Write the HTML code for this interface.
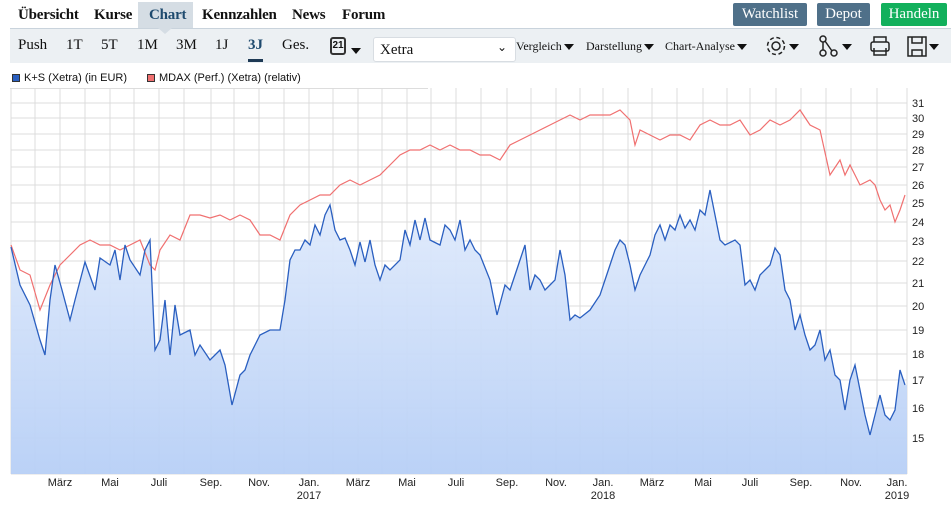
<!DOCTYPE html>
<html><head><meta charset="utf-8"><style>
*{margin:0;padding:0;box-sizing:border-box}
body{width:951px;height:507px;background:#fff;font-family:"Liberation Serif",serif;position:relative;overflow:hidden;color:#111}
.a{position:absolute;white-space:nowrap}
.nav{font-weight:bold;font-size:15px;top:7px;letter-spacing:-0.2px}
.btn{top:3px;height:23px;color:#fff;font-size:15px;text-align:center;line-height:23px;border-radius:2px}
.tb{font-size:15px;top:37px}
.dd{font-size:12px;top:39px}
.tri{display:inline-block;width:0;height:0;border-left:5px solid transparent;border-right:5px solid transparent;border-top:6px solid #111;vertical-align:middle;margin-left:2px}
.lg{font-family:"Liberation Sans",sans-serif;font-size:11px;top:72px}
</style></head><body>
<div class="a" style="left:138px;top:2px;width:55px;height:26px;background:#d5dde4"></div>
<div class="a nav" style="left:18px">Übersicht</div>
<div class="a nav" style="left:94px">Kurse</div>
<div class="a nav" style="left:149px;color:#1e4a6e">Chart</div>
<div class="a nav" style="left:202px">Kennzahlen</div>
<div class="a nav" style="left:292px">News</div>
<div class="a nav" style="left:342px">Forum</div>
<div class="a btn" style="left:733px;width:74px;background:#4f7089">Watchlist</div>
<div class="a btn" style="left:817px;width:53px;background:#4f7089">Depot</div>
<div class="a btn" style="left:881px;width:66px;background:#12b05c">Handeln</div>
<div class="a" style="left:10px;top:28px;width:941px;height:35px;background:#ecf0f3;border-top:1px solid #c9d3dc"></div>
<div class="a" style="left:158px;top:28px;width:0;height:0;border-left:7px solid transparent;border-right:7px solid transparent;border-top:6px solid #d5dde4"></div>
<div class="a tb" style="left:18px">Push</div>
<div class="a tb" style="left:66px">1T</div>
<div class="a tb" style="left:101px">5T</div>
<div class="a tb" style="left:137px">1M</div>
<div class="a tb" style="left:176px">3M</div>
<div class="a tb" style="left:215px">1J</div>
<div class="a tb" style="left:248px;font-weight:bold;color:#1e4a6e">3J</div>
<div class="a" style="left:248px;top:59px;width:15px;height:3px;background:#1e3a55"></div>
<div class="a tb" style="left:282px">Ges.</div>
<div class="a" style="left:330px;top:37px;width:16px;height:18px;border:2px solid #333;border-radius:3px;font:bold 10px 'Liberation Sans',sans-serif;text-align:center;line-height:14px">21</div>
<div class="a" style="left:349px;top:42px"><span class="tri"></span></div>
<div class="a" style="left:373px;top:37px;width:143px;height:25px;background:#fff;border:1px solid #d8dde2;border-radius:3px;font-size:15px;padding:4px 6px">Xetra<span style="position:absolute;right:8px;top:2px;font-size:12px">⌄</span></div>
<div class="a dd" style="left:516px">Vergleich<span class="tri"></span></div>
<div class="a dd" style="left:586px">Darstellung<span class="tri"></span></div>
<div class="a dd" style="left:665px">Chart-Analyse<span class="tri"></span></div>
<svg class="a" style="left:765px;top:34px" width="185" height="26" fill="none" stroke="#222" stroke-width="1.5">
<circle cx="11" cy="12" r="4"/><circle cx="11" cy="12" r="8.5" stroke-dasharray="4 2.7"/>
<path d="M24 10h10l-5 6z" fill="#111" stroke="none"/>
<circle cx="58" cy="5" r="3"/><circle cx="58" cy="19" r="3"/><circle cx="69" cy="19" r="3"/><path d="M58 8v8M60 7l7 10"/>
<path d="M77 10h10l-5 6z" fill="#111" stroke="none"/>
<rect x="106" y="8" width="18" height="9" rx="2"/><path d="M109 8V3h12v5M109 14v7h12v-7"/>
<rect x="143" y="3" width="18" height="19"/><path d="M147 3v6h10V3M147 22v-6h10v6"/>
<path d="M164 10h10l-5 6z" fill="#111" stroke="none"/>
</svg>
<div class="a" style="left:12px;top:74px;width:8px;height:8px;background:#2a5fc0;border:1px solid #333"></div>
<div class="a lg" style="left:24px">K+S (Xetra) (in EUR)</div>
<div class="a" style="left:147px;top:74px;width:8px;height:8px;background:#f07070;border:1px solid #333"></div>
<div class="a lg" style="left:159px">MDAX (Perf.) (Xetra) (relativ)</div>
<div class="a" style="left:10px;top:88px;width:418px;height:1px;background:#ddd"></div>
<svg class="a" style="left:0;top:0" width="951" height="507" font-family="Liberation Sans,sans-serif" font-size="11">
<defs><linearGradient id="g" x1="0" y1="0" x2="0" y2="1"><stop offset="0" stop-color="#e2ecfc"/><stop offset="1" stop-color="#b7cff6"/></linearGradient></defs>
<g stroke="#dcdcdc" stroke-width="1">
<path d="M11 88V474M907 88V474"/>
<path d="M11 103H907M11 118H907M11 134H907M11 150H907M11 167H907M11 185H907M11 203H907M11 222H907M11 241H907M11 261H907M11 283H907M11 306H907M11 330H907M11 354H907M11 380H907M11 408H907M11 438H907M11 474H907"/>
<path d="M35 88V474M60 88V474M85 88V474M110 88V474M134 88V474M159 88V474M184 88V474M211 88V474M234 88V474M259 88V474M284 88V474M309 88V474M333 88V474M358 88V474M382 88V474M407 88V474M431 88V474M456 88V474M481 88V474M507 88V474M531 88V474M556 88V474M580 88V474M603 88V474M628 88V474M652 88V474M677 88V474M703 88V474M727 88V474M750 88V474M776 88V474M801 88V474M826 88V474M851 88V474M877 88V474"/>
</g>
<polygon fill="url(#g)" opacity="0.95" points="11,474 11,247 20,285 30,305 40,340 45,355 50,300 55,265 62,290 70,320 75,300 85,262 95,290 100,258 110,265 115,250 120,280 125,245 130,260 140,275 145,250 150,240 155,350 160,340 165,300 170,355 175,305 180,335 190,330 195,355 200,345 210,360 220,350 225,365 232,405 240,375 245,370 250,355 255,345 260,335 270,330 280,330 285,300 290,260 295,250 300,250 305,240 310,245 315,225 320,235 325,215 330,205 335,230 340,240 345,238 350,250 355,265 360,242 365,262 370,240 375,265 380,280 385,265 390,270 400,260 405,230 410,245 415,220 420,240 425,218 430,240 440,245 445,225 450,230 455,240 460,220 465,250 470,240 475,250 480,255 490,280 497,315 505,285 510,290 515,275 520,260 525,245 530,290 535,275 540,280 545,290 550,285 555,280 560,250 565,275 570,320 575,315 580,318 590,310 600,295 610,265 615,250 620,240 625,245 630,265 635,290 640,275 645,265 650,255 655,235 660,225 665,240 670,225 675,230 680,215 685,228 690,220 695,230 700,210 705,215 710,190 715,215 720,240 725,245 735,240 740,245 745,285 750,280 755,290 760,275 765,270 770,265 775,248 780,255 785,290 790,300 795,330 800,315 805,335 810,350 815,345 820,330 825,360 830,350 835,375 840,380 845,410 850,380 855,365 860,390 865,415 870,435 875,415 880,395 885,415 890,420 895,410 900,370 905,385 907,385 907,474"/>
<polyline fill="none" stroke="#f07070" stroke-width="1.2" points="11,245 20,270 30,275 40,310 50,285 60,265 70,255 80,245 90,240 100,245 110,245 120,250 130,245 140,240 150,265 155,270 160,250 170,235 180,240 190,215 200,215 210,218 220,215 230,220 240,215 250,220 260,235 270,235 280,240 290,215 300,205 310,200 320,195 330,195 340,185 350,180 360,185 370,180 380,175 390,165 400,155 410,150 420,150 430,145 440,150 450,145 460,150 470,150 480,155 490,155 500,160 510,145 520,140 530,135 540,130 550,125 560,120 570,115 580,120 590,115 600,115 610,115 620,110 630,120 635,145 640,130 650,135 660,140 670,135 680,135 690,140 700,125 710,120 720,125 730,125 740,120 750,135 760,130 770,120 780,125 790,120 800,110 810,125 820,130 830,175 840,160 845,175 850,165 860,185 870,180 875,185 880,200 885,210 890,205 895,222 900,210 905,195"/>
<polyline fill="none" stroke="#2a5fc0" stroke-width="1.3" points="11,247 20,285 30,305 40,340 45,355 50,300 55,265 62,290 70,320 75,300 85,262 95,290 100,258 110,265 115,250 120,280 125,245 130,260 140,275 145,250 150,240 155,350 160,340 165,300 170,355 175,305 180,335 190,330 195,355 200,345 210,360 220,350 225,365 232,405 240,375 245,370 250,355 255,345 260,335 270,330 280,330 285,300 290,260 295,250 300,250 305,240 310,245 315,225 320,235 325,215 330,205 335,230 340,240 345,238 350,250 355,265 360,242 365,262 370,240 375,265 380,280 385,265 390,270 400,260 405,230 410,245 415,220 420,240 425,218 430,240 440,245 445,225 450,230 455,240 460,220 465,250 470,240 475,250 480,255 490,280 497,315 505,285 510,290 515,275 520,260 525,245 530,290 535,275 540,280 545,290 550,285 555,280 560,250 565,275 570,320 575,315 580,318 590,310 600,295 610,265 615,250 620,240 625,245 630,265 635,290 640,275 645,265 650,255 655,235 660,225 665,240 670,225 675,230 680,215 685,228 690,220 695,230 700,210 705,215 710,190 715,215 720,240 725,245 735,240 740,245 745,285 750,280 755,290 760,275 765,270 770,265 775,248 780,255 785,290 790,300 795,330 800,315 805,335 810,350 815,345 820,330 825,360 830,350 835,375 840,380 845,410 850,380 855,365 860,390 865,415 870,435 875,415 880,395 885,415 890,420 895,410 900,370 905,385"/>
<g fill="#222">
<text x="912" y="107">31</text><text x="912" y="122">30</text><text x="912" y="138">29</text><text x="912" y="154">28</text><text x="912" y="171">27</text><text x="912" y="189">26</text><text x="912" y="207">25</text><text x="912" y="226">24</text><text x="912" y="245">23</text><text x="912" y="265">22</text><text x="912" y="287">21</text><text x="912" y="310">20</text><text x="912" y="334">19</text><text x="912" y="358">18</text><text x="912" y="384">17</text><text x="912" y="412">16</text><text x="912" y="442">15</text>
</g>
<g fill="#222" text-anchor="middle">
<text x="60" y="486">März</text><text x="110" y="486">Mai</text><text x="159" y="486">Juli</text><text x="211" y="486">Sep.</text><text x="259" y="486">Nov.</text><text x="309" y="486">Jan.</text><text x="309" y="499">2017</text>
<text x="358" y="486">März</text><text x="407" y="486">Mai</text><text x="456" y="486">Juli</text><text x="507" y="486">Sep.</text><text x="556" y="486">Nov.</text><text x="603" y="486">Jan.</text><text x="603" y="499">2018</text>
<text x="652" y="486">März</text><text x="703" y="486">Mai</text><text x="750" y="486">Juli</text><text x="801" y="486">Sep.</text><text x="851" y="486">Nov.</text><text x="897" y="486">Jan.</text><text x="897" y="499">2019</text>
</g>
</svg>
</body></html>
